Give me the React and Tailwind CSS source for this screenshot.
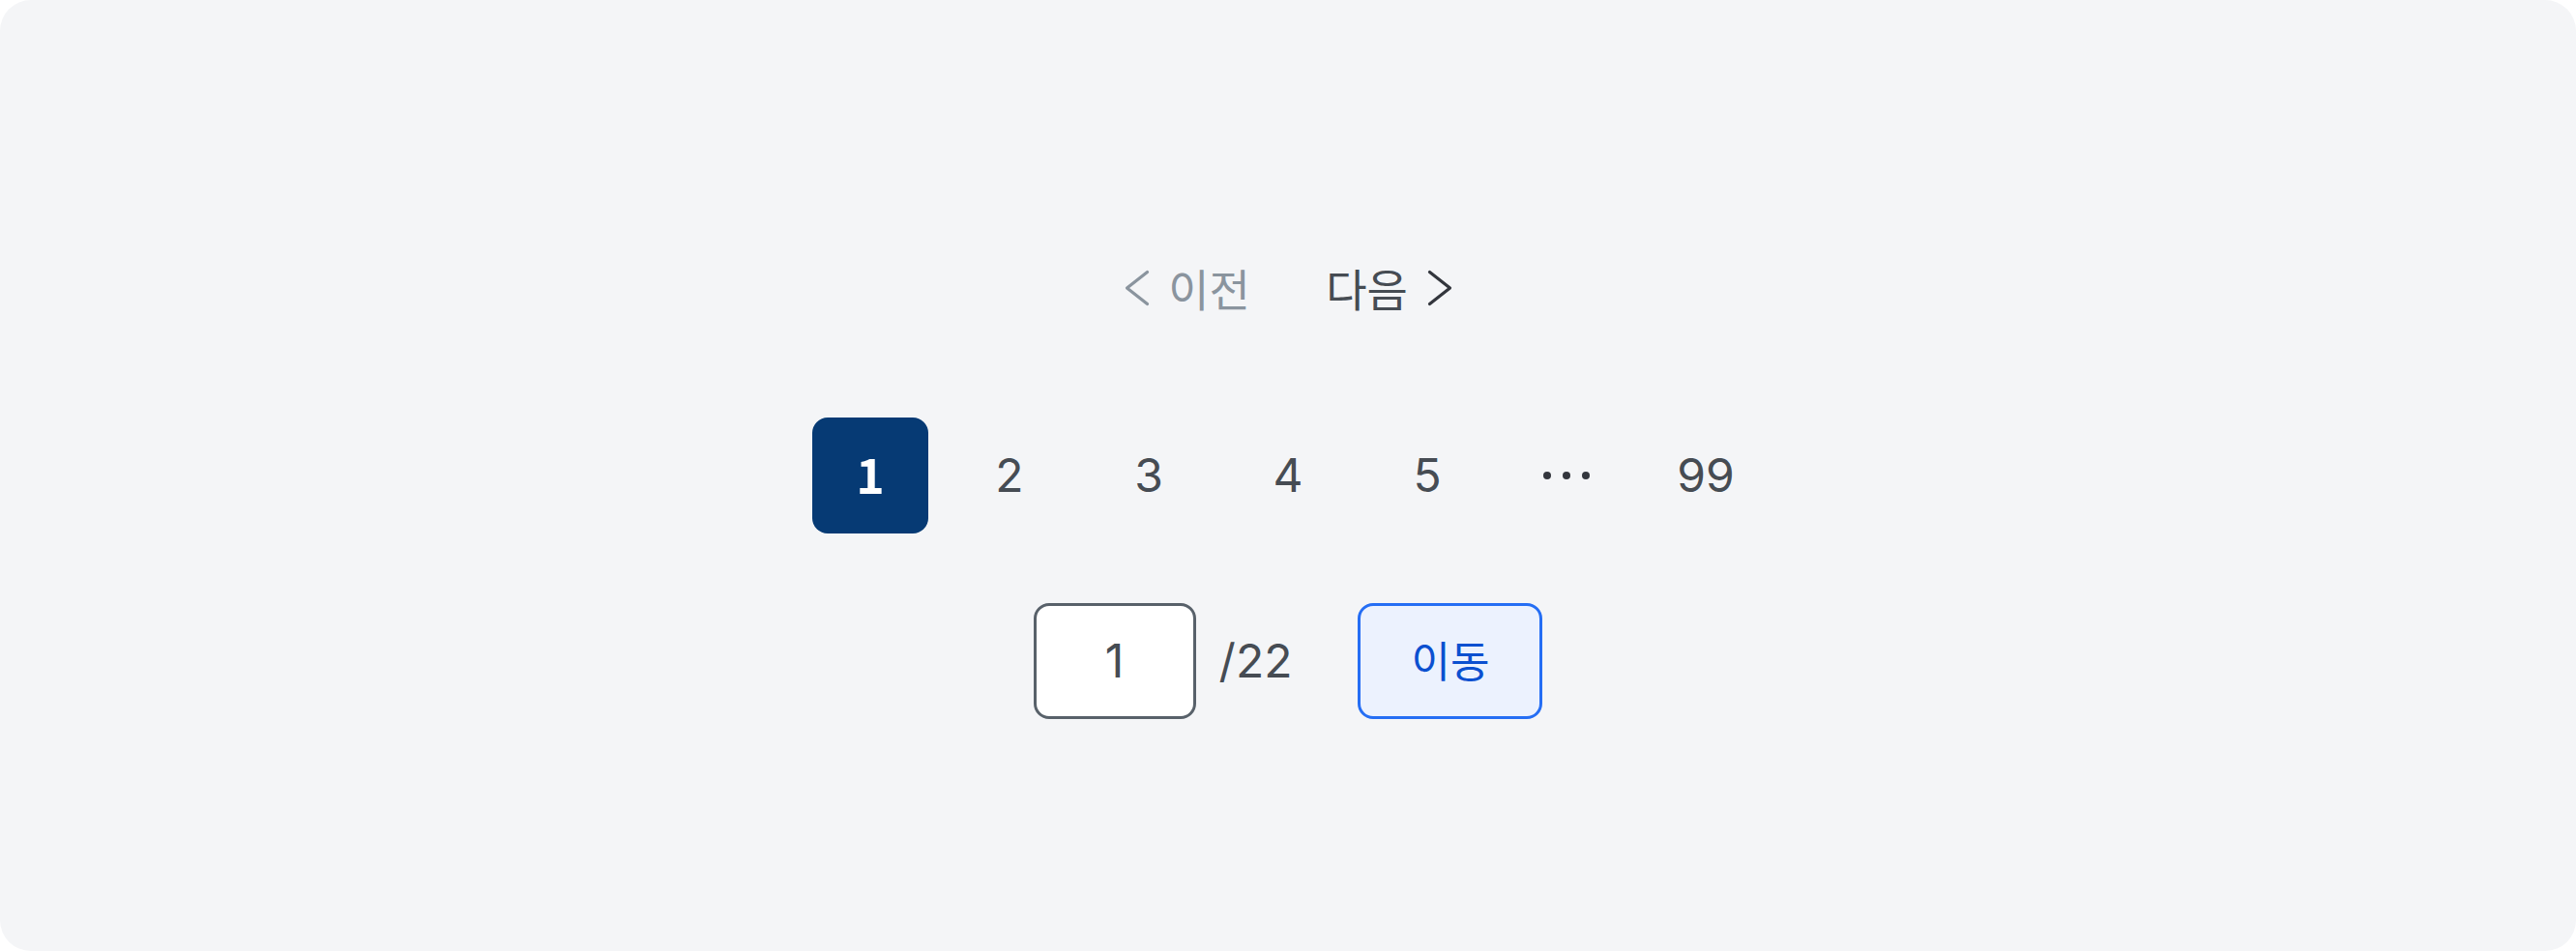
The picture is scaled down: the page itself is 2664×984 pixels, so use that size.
import React from 'react';

const font = { fontFamily: 'Inter, "Noto Sans CJK KR", sans-serif' };
const kr = { fontFamily: '"Noto Sans CJK KR", sans-serif' };

const Chevron = ({ dir = 'left', className }) => (
  <svg width="26" height="38" viewBox="0 0 26 38" fill="none" className={className}>
    {dir === 'left' ? (
      <path d="M23.5 2.5 L2.5 19 L23.5 35.5" stroke="currentColor" strokeWidth="3.2" strokeLinecap="round" strokeLinejoin="round" />
    ) : (
      <path d="M2.5 2.5 L23.5 19 L2.5 35.5" stroke="currentColor" strokeWidth="3.2" strokeLinecap="round" strokeLinejoin="round" />
    )}
  </svg>
);

const pages = ['1', '2', '3', '4', '5', 'dots', '99'];

export default function App() {
  return (
    <div className="w-[2664px] h-[984px] bg-white">
      <div
        className="w-full h-full rounded-[32px] bg-[#f4f5f7] flex flex-col items-center pt-[262px]"
        style={font}
      >
        {/* prev / next */}
        <div className="h-[72px] flex items-center">
          <button className="flex items-center gap-[14px] text-[#8a949e]">
            <Chevron dir="left" />
            <span className="text-[46px] leading-none w-[96px] text-center pb-[3px]" style={kr}>이전</span>
          </button>
          <button className="flex items-center gap-[14px] ml-[67px]">
            <span className="text-[46px] leading-none w-[96px] text-center text-[#464c53] pb-[3px]" style={kr}>다음</span>
            <Chevron dir="right" className="text-[#33363d]" />
          </button>
        </div>

        {/* pages */}
        <div className="mt-[98px] flex gap-6">
          {pages.map((p) =>
            p === 'dots' ? (
              <div key={p} className="w-[120px] h-[120px] flex items-center justify-center gap-3">
                <span className="w-2 h-2 rounded-full bg-[#33363d]" />
                <span className="w-2 h-2 rounded-full bg-[#33363d]" />
                <span className="w-2 h-2 rounded-full bg-[#33363d]" />
              </div>
            ) : p === '1' ? (
              <button
                key={p}
                className="w-[120px] h-[120px] rounded-2xl bg-[#063a74] text-white text-[50px] leading-none font-bold flex items-center justify-center pb-[7px]"
                style={kr}
              >
                {p}
              </button>
            ) : (
              <button
                key={p}
                className="w-[120px] h-[120px] rounded-2xl text-[#464c53] text-[48px] flex items-center justify-center"
              >
                {p}
              </button>
            )
          )}
        </div>

        {/* go to page */}
        <div className="mt-[72px] flex items-center">
          <div className="w-[168px] h-[120px] rounded-2xl border-[3px] border-[#58616a] bg-white flex items-center justify-center text-[48px] text-[#464c53]">
            1
          </div>
          <span className="ml-6 text-[48px] text-[#464c53] leading-none">/22</span>
          <button
            className="ml-[68px] w-[191px] h-[120px] rounded-2xl border-[3px] border-[#256ef4] bg-[#ecf2fe] text-[#0b50d0] text-[44px] leading-none flex items-center justify-center pb-[5px]"
            style={kr}
          >
            이동
          </button>
        </div>
      </div>
    </div>
  );
}
